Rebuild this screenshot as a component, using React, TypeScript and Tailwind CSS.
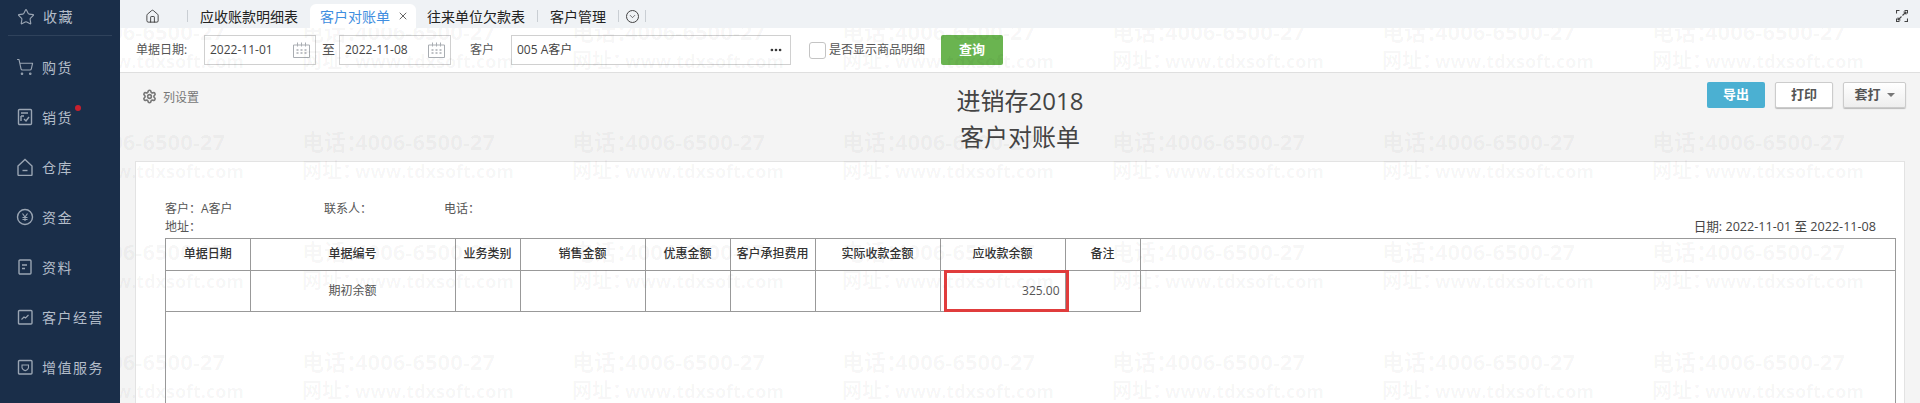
import React from "react";
import { ChevronDown, Ellipsis, Home, Settings, ShoppingCart, Star, X } from "lucide-react";

const FONT = "font-['Open_Sans','Noto_Sans_CJK_SC',sans-serif]";

const IconBox = ({ children }: { children: React.ReactNode }) => (
  <svg width="18" height="18" viewBox="0 0 18 18" fill="none" stroke="#9aa5b3" strokeWidth="1.4">
    {children}
  </svg>
);

const navItems = [
  {
    label: "购货",
    icon: <ShoppingCart size={18} strokeWidth={1.5} color="#9aa5b3" />,
  },
  {
    label: "销货",
    dot: true,
    icon: (
      <IconBox>
        <rect x="2.5" y="1.5" width="13" height="15" rx="1" />
        <path d="M5 5h7M5 8h3M5 8v5M8 11l2 2 3-4" />
      </IconBox>
    ),
  },
  {
    label: "仓库",
    icon: (
      <IconBox>
        <path d="M2 8l7-6.5L16 8v8.5a1 1 0 0 1-1 1H3a1 1 0 0 1-1-1z" />
        <path d="M6.5 12.5h5" />
      </IconBox>
    ),
  },
  {
    label: "资金",
    icon: (
      <IconBox>
        <circle cx="9" cy="9" r="7.5" />
        <path d="M6.5 5.5L9 9l2.5-3.5M9 9v4M6.5 9.5h5M6.5 11.5h5" strokeWidth="1.1" />
      </IconBox>
    ),
  },
  {
    label: "资料",
    icon: (
      <IconBox>
        <rect x="3" y="2" width="12" height="14" rx="1" />
        <path d="M6 7h5M6 10.5h3" />
      </IconBox>
    ),
  },
  {
    label: "客户经营",
    icon: (
      <IconBox>
        <rect x="2.5" y="2.5" width="13.5" height="13.5" rx="1" />
        <path d="M5.5 11.5l2.5-2.5 1.5 1 3-3" strokeWidth="1.1" />
      </IconBox>
    ),
  },
  {
    label: "增值服务",
    icon: (
      <IconBox>
        <rect x="2.5" y="2.5" width="13.5" height="13.5" rx="1" />
        <path d="M6 7h6.5v2.5c0 1.5-1.8 2.6-3.25 3.2C7.8 12.1 6 11 6 9.5z" strokeWidth="1.1" />
      </IconBox>
    ),
  },
];

const Sidebar = () => (
  <div className="w-[120px] shrink-0 h-full bg-[#1a2e49] text-[#b4bdc9] text-[14px] tracking-[1.5px] overflow-hidden">
    <div className="flex items-center h-[36px] mx-[8px] pl-[9px] pb-[2px] border-b border-[#2f425b]">
      <Star size={18} strokeWidth={1.5} color="#9aa5b3" />
      <span className="ml-[8px]">收藏</span>
    </div>
    <div className="pt-[6px]">
      {navItems.map((item) => (
        <div key={item.label} className="flex items-center h-[50px] pl-[16px]">
          <span className="w-[26px] flex">{item.icon}</span>
          <span className="relative">
            {item.label}
            {item.dot && (
              <span className="absolute -top-[2px] -right-[8px] w-[6px] h-[6px] rounded-full bg-[#c8202e]" />
            )}
          </span>
        </div>
      ))}
    </div>
  </div>
);

const Sep = () => <span className="block w-px h-[12px] bg-[#c9ced3]" />;

const TabBar = () => (
  <div className="relative z-10 flex items-end h-[28px] shrink-0 bg-[#eff2f5] text-[14px] text-[#222] pl-[25px] pr-[12px]">
    <div className="flex items-center h-[24px]">
      <Home size={15} strokeWidth={1.4} className="text-[#333]" />
      <span className="ml-[27px] mr-[12px]">
        <Sep />
      </span>
      <span className="inline-flex items-center">应收账款明细表</span>
    </div>
    <div className="flex items-center h-[24px] w-[106px] ml-[12px] pl-[10px] bg-white rounded-t-[6px] text-[#3f8ee0]">
      客户对账单
      <X size={12} strokeWidth={1.8} className="ml-[7px] text-[#555]" />
    </div>
    <div className="flex items-center h-[24px] ml-[11px]">
      往来单位欠款表
      <span className="mx-[12px] flex">
        <Sep />
      </span>
      客户管理
      <span className="mx-[7px] ml-[12px] flex">
        <Sep />
      </span>
      <span className="flex items-center justify-center w-[13px] h-[13px] rounded-full border border-[#444]">
        <ChevronDown size={9} strokeWidth={1.6} />
      </span>
      <span className="ml-[6px] flex">
        <Sep />
      </span>
    </div>
    <div className="ml-auto h-[24px] flex items-center">
      <svg width="12" height="12" viewBox="0 0 12 12" fill="none" stroke="#444" strokeWidth="1.1">
        <path d="M0.5 3.5V0.5H3.5M8.5 0.5H11.5V3.5M0.5 8.5V11.5H3.5M11.5 8.5V11.5H8.5" />
        <path d="M6.5 5.5L10 2M10 2H7.5M10 2V4.5M5.5 6.5L2 10M2 10H4.5M2 10V7.5" />
      </svg>
    </div>
  </div>
);

const CalendarIcon = () => (
  <svg width="17" height="16" viewBox="0 0 17 16" fill="none" stroke="#a9adb2" strokeWidth="1">
    <path d="M0.5 3h16v12.5H0.5z" />
    <path d="M4.5 0.5v4M8.5 0.5v4M12.5 0.5v4" />
    <path d="M3.5 8h2M7.5 8h2M11.5 8h2M3.5 11h2M7.5 11h2M11.5 11h2" strokeWidth="1.4" />
  </svg>
);

const DateInput = ({ value }: { value: string }) => (
  <div className="flex items-center justify-between w-[112px] h-[30px] border border-[#d0d0d0] bg-white pl-[5px] pr-[5px] text-[12px] text-[#444]">
    {value}
    <CalendarIcon />
  </div>
);

const FilterBar = () => (
  <div className="flex items-center h-[45px] shrink-0 bg-white border-b border-[#dfdfdf] pl-[16px] text-[12px] text-[#555]">
    <span className="w-[68px]">单据日期:</span>
    <DateInput value="2022-11-01" />
    <span className="w-[23px] pl-[6px] text-[13px]">至</span>
    <DateInput value="2022-11-08" />
    <span className="ml-[19px] w-[41px]">客户</span>
    <div className="flex items-center justify-between w-[280px] h-[30px] border border-[#d0d0d0] pl-[5px] pr-[7px] text-[#444]">
      005 A客户
      <Ellipsis size={14} strokeWidth={2.6} className="text-[#333]" />
    </div>
    <span className="ml-[18px] w-[17px] h-[17px] border border-[#c4c4c4] rounded-[3px]" />
    <span className="ml-[3px]">是否显示商品明细</span>
    <button className="ml-[16px] w-[62px] h-[30px] rounded-[2px] bg-[#6ab450] text-white text-[13px] font-bold">
      查询
    </button>
  </div>
);

const Toolbar = () => (
  <div className="grid grid-cols-[1fr_auto_1fr] h-[88px] shrink-0 bg-[#f4f4f4]">
    <div className="flex items-start pl-[22px] pt-[16px] text-[12px] text-[#777]">
      <Settings size={15} strokeWidth={2.6} className="text-[#777]" />
      <span className="ml-[6px]">列设置</span>
    </div>
    <div className="text-center text-[24px] leading-[36px] text-[#444] pt-[10px]">
      <div>进销存2018</div>
      <div>客户对账单</div>
    </div>
    <div className="flex justify-end items-start pt-[9px] pr-[14px] gap-[10px] text-[13px]">
      <button className="w-[58px] h-[26px] rounded-[2px] bg-[#4bb0d2] text-white font-bold">导出</button>
      <button className="w-[58px] h-[26px] rounded-[2px] bg-white border border-[#ccc] text-[#555] font-bold shadow-[0_1px_1px_#bbb]">
        打印
      </button>
      <button className="flex items-center justify-center gap-[6px] w-[63px] h-[26px] rounded-[2px] bg-gradient-to-b from-white to-[#eee] border border-[#ccc] text-[#555] font-bold shadow-[0_1px_1px_#bbb]">
        套打
        <span className="border-x-[4px] border-x-transparent border-t-[4px] border-t-[#777]" />
      </button>
    </div>
  </div>
);

const headers = ["单据日期", "单据编号", "业务类别", "销售金额", "优惠金额", "客户承担费用", "实际收款金额", "应收款余额", "备注"];
const colWidths = ["w-[84px]", "w-[205px]", "w-[65px]", "w-[125px]", "w-[85px]", "w-[85px]", "w-[125px]", "w-[125px]", "w-[75px]"];

const Report = () => (
  <div className="flex-1 mx-[15px] bg-white border-t border-x border-[#e3e3e3] pl-[29px] pr-[8px] pt-[38px] text-[12px] text-[#555]">
    <div className="grid grid-cols-[159px_120px_1fr] leading-[18px]">
      <span>客户：A客户</span>
      <span>联系人：</span>
      <span>电话：</span>
    </div>
    <div className="flex justify-between items-center h-[18px]">
      <span>地址：</span>
      <span className="pr-[20px] text-[12.6px] text-[#444]">日期: 2022-11-01 至 2022-11-08</span>
    </div>
    <div className="mt-[2px] h-[200px] border border-[#999]">
      <table className="w-full table-fixed border-collapse">
        <colgroup>
          {colWidths.map((w, i) => (
            <col key={i} className={w} />
          ))}
          <col />
        </colgroup>
        <tbody>
          <tr className="h-[31px]">
            {headers.map((h) => (
              <td key={h} className="border-r border-b border-[#999] text-center text-[#333] font-medium">
                {h}
              </td>
            ))}
            <td className="border-b border-[#999]" />
          </tr>
          <tr className="h-[41px]">
            {headers.map((h, i) => (
              <td key={h} className="relative border-r border-b border-[#999] text-center">
                {i === 1 && "期初余额"}
                {i === 7 && <div className="text-right pr-[5px]">325.00</div>}
                {i === 7 && (
                  <span className="absolute left-[3px] -right-[4px] -top-px -bottom-px border-[3px] border-[#e03c3c]" />
                )}
              </td>
            ))}
            <td />
          </tr>
        </tbody>
      </table>
    </div>
  </div>
);

// watermark tiles lie over the page, only the tab bar and sidebar cover them
const Watermark = () => (
  <div className="absolute inset-0 overflow-hidden pointer-events-none">
    <div className="flex flex-wrap w-[2160px] -ml-[88px] mt-[16px]">
      {Array.from({ length: 32 }).map((_, i) => (
        <div key={i} className="w-[270px] h-[110px] font-bold text-black/[0.04]">
          <div className="text-[22px] leading-[30px] whitespace-nowrap">
            电话：<span className="-ml-[13px]">4006-6500-27</span>
          </div>
          <div className="text-[18px] leading-[30px] whitespace-nowrap">
            <span className="text-[20px]">网址：</span>
            <span className="-ml-[7px]">www.tdxsoft.com</span>
          </div>
        </div>
      ))}
    </div>
  </div>
);

const App = () => {
  return (
    <div className={`flex h-[403px] w-full overflow-hidden bg-[#f4f4f4] ${FONT}`}>
      <Sidebar />
      <div className="relative flex flex-col flex-1 min-w-0">
        <TabBar />
        <FilterBar />
        <Toolbar />
        <Report />
        <Watermark />
      </div>
    </div>
  );
};

export default App;
